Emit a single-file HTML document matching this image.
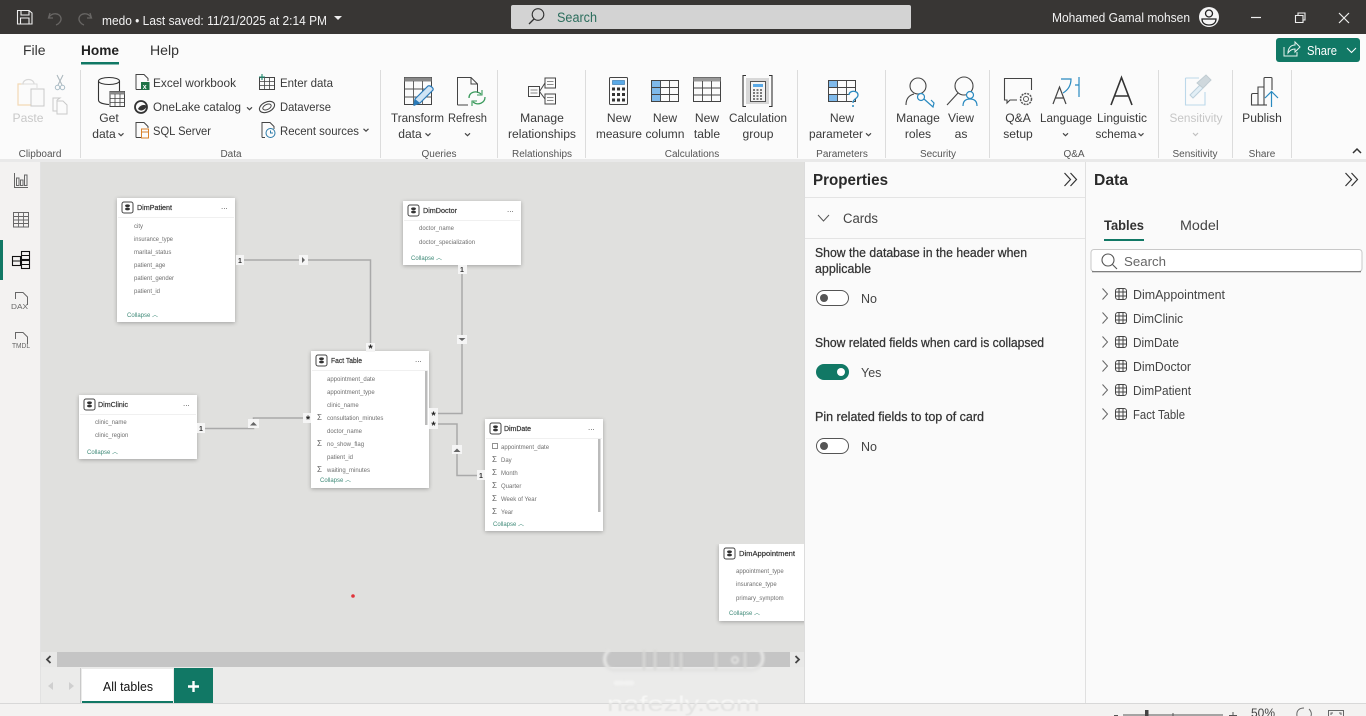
<!DOCTYPE html>
<html lang="en"><head><meta charset="utf-8"><title>Power BI Desktop</title>
<style>
html,body{margin:0;padding:0;width:1366px;height:716px;overflow:hidden;background:#f3f2f1}
.b{position:absolute}
.card{position:absolute;background:#fff;box-shadow:0 1px 4px rgba(0,0,0,.28)}
svg{position:absolute;left:0;top:0}
text{font-family:"Liberation Sans",sans-serif}
.r{font-size:12.1px;fill:#3a3a3a}
.m{text-anchor:middle}
.g{font-size:10px;fill:#555;text-anchor:middle}
.p{font-size:12.5px;fill:#333;font-weight:400;stroke:#333;stroke-width:.25}
.l{font-size:12.5px;fill:#444}
.ct{font-size:7px;fill:#333;stroke:#333;stroke-width:.2}
.f{font-size:6px;fill:#6f6f6f}
.c{font-size:6px;fill:#3f8a78}
.ln{fill:none;stroke:#a9a9a9;stroke-width:1.5}
.mk{fill:#f5f5f5}
.nm{font-size:7px;fill:#333;text-anchor:middle;font-weight:bold}
</style></head><body>
<div class="b" style="left:0;top:0;width:1366px;height:34px;background:#383634"></div>
<div class="b" style="left:511px;top:5px;width:400px;height:24px;background:#d3d3d3;border-radius:2px"></div>
<div class="b" style="left:0;top:34px;width:1366px;height:126px;background:#fbfbfb"></div>
<div class="b" style="left:0;top:159px;width:1366px;height:3px;background:#e9e9e9"></div>
<div class="b" style="left:0;top:162px;width:40px;height:541px;background:#f3f2f1"></div>
<div class="b" style="left:40px;top:162px;width:1px;height:541px;background:#e2e2e2"></div>
<div class="b" style="left:41px;top:162px;width:763px;height:490px;background:#e0e0de"></div>
<div class="b" style="left:41px;top:652px;width:763px;height:15px;background:#e8e8e7"></div>
<div class="b" style="left:57px;top:652px;width:733px;height:15px;background:#c5c5c5"></div>
<div class="b" style="left:41px;top:667px;width:763px;height:36px;background:#ebebea"></div>
<div class="b" style="left:804px;top:162px;width:1px;height:541px;background:#dcdcdc"></div>
<div class="b" style="left:805px;top:162px;width:280px;height:541px;background:#fafafa"></div>
<div class="b" style="left:1085px;top:162px;width:1px;height:541px;background:#e0e0e0"></div>
<div class="b" style="left:1086px;top:162px;width:280px;height:541px;background:#fafafa"></div>
<div class="b" style="left:0;top:703px;width:1366px;height:1px;background:#d8d8d8"></div>
<div class="b" style="left:0;top:240px;width:3px;height:40px;background:#117865"></div>

<div class="card" style="left:117px;top:198px;width:118px;height:124px"></div>
<div class="card" style="left:403px;top:201px;width:118px;height:64px"></div>
<div class="card" style="left:311px;top:351px;width:118px;height:137px"></div>
<div class="card" style="left:485px;top:419px;width:118px;height:112px"></div>
<div class="card" style="left:79px;top:395px;width:118px;height:64px"></div>
<div style="position:absolute;left:715px;top:544px;width:89px;height:84px;overflow:hidden"><div class="card" style="left:4px;top:0;width:95px;height:77px"></div></div>

<svg width="1366" height="716" viewBox="0 0 1366 716" xmlns="http://www.w3.org/2000/svg">
<defs>
<linearGradient id="wm" gradientUnits="userSpaceOnUse" x1="0" y1="694" x2="0" y2="714"><stop offset="0" stop-color="#f7f7f6"/><stop offset=".44" stop-color="#f7f7f6"/><stop offset=".46" stop-color="#e3e3e2"/><stop offset="1" stop-color="#e3e3e2"/></linearGradient>
<g id="ci"><rect x="0" y="0" width="11" height="11" rx="2" fill="#fff" stroke="#444" stroke-width="1"/><ellipse cx="5.5" cy="3.8" rx="2.4" ry="1.4" fill="#333"/><ellipse cx="5.5" cy="7" rx="2.4" ry="1.4" fill="#333"/></g>
<g id="tb"><rect x="-5.5" y="-5.5" width="11" height="11" rx="2.5" fill="none" stroke="#444" stroke-width="1"/><path d="M-2 -5.5V5.5M2 -5.5V5.5M-5.5 -2H5.5M-5.5 2H5.5" stroke="#444" stroke-width="1"/></g>
<path id="ch" d="M-2.5 -1.2L0 1.2L2.5 -1.2" fill="none" stroke="#444" stroke-width="1.2"/>
<path id="dbl" d="M0 0L6 6.5L0 13M6 0L12 6.5L6 13" fill="none" stroke="#333" stroke-width="1.2"/>
<path id="rt" d="M-2.5 -5.5L2.5 0L-2.5 5.5" fill="none" stroke="#666" stroke-width="1"/>
<g id="sg"><text font-size="8" fill="#666" style="font-family:'Liberation Sans',sans-serif">Σ</text></g>
</defs>

<!-- title bar -->
<path d="M17.5 10.5H29L32 13V24H17.5ZM21 10.5V15H29V10.5M20.500 24V18H29V24" fill="none" stroke="#eee" stroke-width="1.100"/>
<path d="M50 13L48.500 18L53 18M49 17.500C52 12 60 13 61 18C61.500 21 59 24 56 25" fill="none" stroke="#686664" stroke-width="1.300"/>
<path d="M90 13L91.500 18L87 18M91 17.500C88 12 80 13 79 18C78.500 21 81 24 84 25" fill="none" stroke="#686664" stroke-width="1.300"/>
<text x="102" y="25" font-size="13" fill="#f2f2f2" textLength="225" lengthAdjust="spacingAndGlyphs">medo • Last saved: 11/21/2025 at 2:14 PM</text>
<path d="M334 16H342L338 20Z" fill="#eee"/>
<circle cx="538" cy="14.500" r="5.800" fill="none" stroke="#333" stroke-width="1.100"/><path d="M534 19L529 24" stroke="#333" stroke-width="1.300"/>
<text x="557" y="22" font-size="13.500" fill="#2c6e5d" textLength="40" lengthAdjust="spacingAndGlyphs">Search</text>
<text x="1052" y="22" font-size="12.500" fill="#f2f2f2" textLength="138" lengthAdjust="spacingAndGlyphs">Mohamed Gamal mohsen</text>
<circle cx="1209" cy="17" r="10" fill="#f5f5f5"/><circle cx="1209" cy="13.500" r="3.500" fill="none" stroke="#222" stroke-width="1.300"/><path d="M1202 19H1216C1216 23 1213 25 1209 25C1205 25 1202 23 1202 19Z" fill="none" stroke="#222" stroke-width="1.300"/>
<path d="M1251 17.500H1261" stroke="#eee" stroke-width="1.200"/>
<path d="M1295.500 15.500H1303V22.500H1295.500ZM1298 15V13H1305V20H1303" fill="none" stroke="#eee" stroke-width="1.100"/>
<path d="M1339 13L1349 23M1349 13L1339 23" stroke="#eee" stroke-width="1.200"/>

<!-- tabs -->
<text x="23" y="55" font-size="14" fill="#333">File</text>
<text x="81" y="55" font-size="14" fill="#222" font-weight="bold" textLength="38" lengthAdjust="spacingAndGlyphs">Home</text>
<rect x="81" y="62" width="38" height="2.500" fill="#117865"/>
<text x="150" y="55" font-size="14" fill="#333" textLength="29" lengthAdjust="spacingAndGlyphs">Help</text>
<rect x="1276" y="38" width="84" height="24" rx="3" fill="#117865"/>
<path d="M1284 47V56H1297V52M1288 53C1288 47 1292 45 1295 45V42L1300 47L1295 52V49C1292 49 1290 50 1288 53Z" fill="none" stroke="#e8f3f0" stroke-width="1"/>
<text x="1307" y="55" font-size="13" fill="#fff" textLength="30" lengthAdjust="spacingAndGlyphs">Share</text>
<path d="M1347 48L1351.500 52.500L1356 48" fill="none" stroke="#fff" stroke-width="1.100"/>

<!-- separators -->
<g stroke="#dcdcdc" stroke-width="1">
<path d="M80.500 70V158M380.500 70V158M497.500 70V158M585.500 70V158M797.500 70V158M885.500 70V158M989.500 70V158M1158.500 70V158M1232.500 70V158M1291.500 70V158"/>
</g>
<!-- group labels -->
<text class="g" x="40" y="157">Clipboard</text><text class="g" x="231" y="157">Data</text><text class="g" x="439" y="157">Queries</text><text class="g" x="542" y="157">Relationships</text><text class="g" x="692" y="157">Calculations</text><text class="g" x="842" y="157">Parameters</text><text class="g" x="938" y="157">Security</text><text class="g" x="1074" y="157">Q&amp;A</text><text class="g" x="1195" y="157">Sensitivity</text><text class="g" x="1262" y="157">Share</text>
<path d="M1353 153L1357 149L1361 153" fill="none" stroke="#333" stroke-width="1.500"/>

<!-- clipboard -->
<path d="M24 84H18V105H31" fill="none" stroke="#f3d9b5" stroke-width="1.200"/><path d="M23 84C23 78 34 78 34 84" fill="none" stroke="#d9d9d9" stroke-width="1.200"/><path d="M21 84H37V88" fill="none" stroke="#ddd" stroke-width="1"/>
<rect x="31" y="89" width="13" height="17" fill="#fafafa" stroke="#c9c9c9"/>
<path d="M57 75L62 85M63 75L58 85" stroke="#a9b6bc" stroke-width="1"/><circle cx="57.500" cy="87.500" r="2.200" fill="none" stroke="#a9bcc6"/><circle cx="62.500" cy="87.500" r="2.200" fill="none" stroke="#a9bcc6"/>
<path d="M57 100V111H53V98H60L57 100M57 101H63L67 105V114H57Z" fill="none" stroke="#c9c9c9"/>
<text class="r m" x="28" y="122" style="fill:#c8c8c8">Paste</text>

<!-- get data -->
<ellipse cx="109" cy="81" rx="10.500" ry="3.500" fill="none" stroke="#333" stroke-width="1.100"/><path d="M98.500 81V100C98.500 103 103 104 109 104.500M119.500 81V91" fill="none" stroke="#333" stroke-width="1.100"/>
<rect x="110" y="91.500" width="14.500" height="15" fill="#fbfbfb" stroke="#444"/><rect x="110" y="91.500" width="14.500" height="3" fill="#888"/><path d="M115 94V106M120 94V106M110 98.500H124.500M110 102.500H124.500" stroke="#444" stroke-width=".8"/>
<text class="r m" x="109" y="122">Get</text><text class="r m" x="104" y="138">data</text><use href="#ch" x="121" y="134.500"/>

<path d="M136 89.500V74.500H144L148 78.500V81M136 89.500H141" fill="none" stroke="#444"/><rect x="141" y="82" width="8.500" height="8" fill="#1e7145"/><text x="142.800" y="89" font-size="7" fill="#fff" font-weight="bold">x</text>
<text class="r" x="153" y="87" textLength="83" lengthAdjust="spacingAndGlyphs">Excel workbook</text>
<circle cx="141" cy="107" r="6" fill="none" stroke="#333" stroke-width="1.800"/><path d="M138 109C140 105 144 104 147 106C145 110 141 112 138 109Z" fill="#333"/>
<text class="r" x="153" y="111" textLength="88" lengthAdjust="spacingAndGlyphs">OneLake catalog</text><use href="#ch" x="249.500" y="108.500"/>
<path d="M136 137.500V122.500H144L148 126.500V128M136 137.500H141" fill="none" stroke="#444"/><rect x="141.500" y="129" width="7" height="9" fill="#fbfbfb" stroke="#d9822b"/><path d="M141.500 132H148.500" stroke="#d9822b"/>
<text class="r" x="153" y="135" textLength="58" lengthAdjust="spacingAndGlyphs">SQL Server</text>

<rect x="259.500" y="77.500" width="15" height="12" fill="none" stroke="#444"/><path d="M264.500 77.500V89.500M269.500 77.500V89.500M259.500 81.500H274.500M259.500 85.500H274.500" stroke="#444" stroke-width=".8"/><path d="M262 74V80M259 77H265" stroke="#1e8a6f" stroke-width="1.100"/>
<text class="r" x="280" y="87" textLength="53" lengthAdjust="spacingAndGlyphs">Enter data</text>
<ellipse cx="267" cy="107" rx="8" ry="5" transform="rotate(-25 267 107)" fill="none" stroke="#444" stroke-width="1.100"/><ellipse cx="267" cy="107" rx="4.500" ry="2.500" transform="rotate(-25 267 107)" fill="none" stroke="#444" stroke-width="1"/>
<text class="r" x="280" y="111" textLength="51" lengthAdjust="spacingAndGlyphs">Dataverse</text>
<path d="M262 137.500V122.500H270L274 126.500V129M262 137.500H265" fill="none" stroke="#444"/><circle cx="270.500" cy="133" r="4.500" fill="#fbfbfb" stroke="#2a7aa8"/><path d="M270.500 130.500V133H273" fill="none" stroke="#2a7aa8"/>
<text class="r" x="280" y="135" textLength="79" lengthAdjust="spacingAndGlyphs">Recent sources</text><use href="#ch" x="366" y="130"/>

<!-- queries -->
<rect x="404.500" y="77.500" width="27" height="27" fill="#fbfbfb" stroke="#444"/><rect x="404.500" y="77.500" width="27" height="4" fill="#888"/><path d="M413.500 81V104M422.500 81V104M404.500 89H431.500M404.500 97H431.500" stroke="#555" stroke-width=".9"/>
<path d="M414 105L415 99L428 86C430 85 434 88 433 90L420 103Z" fill="#cfe4f5" stroke="#2a7ab8" stroke-width="1.200"/><path d="M414 106L415 99L420 103Z" fill="#2a7ab8"/>
<text class="r m" x="417.500" y="122" textLength="53" lengthAdjust="spacingAndGlyphs">Transform</text><text class="r m" x="410" y="138">data</text><use href="#ch" x="428" y="134.500"/>
<path d="M457.500 105V77.500H471L477.500 84V93M457.500 105H468M471 77.500V84H477.500" fill="none" stroke="#444"/>
<path d="M469 98C469 92 476 90 481 94M485 97C485 103 478 106 473 102" fill="none" stroke="#3a9a5c" stroke-width="1.300"/><path d="M482 90V95H477M472 106V101H477" fill="none" stroke="#3a9a5c" stroke-width="1.100"/>
<text class="r m" x="467.500" y="122" textLength="39" lengthAdjust="spacingAndGlyphs">Refresh</text><use href="#ch" x="467.500" y="134.500"/>

<!-- relationships -->
<g fill="#fbfbfb" stroke="#444"><rect x="528.500" y="86.500" width="11" height="10"/><rect x="545" y="78" width="10.500" height="10"/><rect x="545" y="94" width="10.500" height="10"/></g>
<path d="M530.500 90H537.500M530.500 93H537.500M547 81.500H553.500M547 84.500H553.500M547 97.500H553.500M547 100.500H553.500" stroke="#666" stroke-width=".8"/>
<path d="M545 83L539.500 91.500L545 99" fill="none" stroke="#444"/>
<text class="r m" x="542" y="122">Manage</text><text class="r m" x="542" y="138" textLength="68" lengthAdjust="spacingAndGlyphs">relationships</text>

<!-- calculations -->
<rect x="609.500" y="77.500" width="18" height="27" rx="1" fill="#fbfbfb" stroke="#444"/><rect x="612.500" y="80.500" width="12" height="4" fill="#5aa9e6" stroke="#2a6fa8" stroke-width=".6"/>
<g fill="#333"><rect x="612" y="87.500" width="3" height="3"/><rect x="617" y="87.500" width="3" height="3"/><rect x="622" y="87.500" width="3" height="3"/><rect x="612" y="93" width="3" height="3"/><rect x="617" y="93" width="3" height="3"/><rect x="622" y="93" width="3" height="3"/><rect x="612" y="98.500" width="3" height="3"/><rect x="617" y="98.500" width="3" height="3"/><rect x="622" y="98.500" width="3" height="3"/></g>
<text class="r m" x="619" y="122">New</text><text class="r m" x="619" y="138" textLength="46" lengthAdjust="spacingAndGlyphs">measure</text>
<rect x="651.500" y="80.500" width="27" height="21" fill="#fbfbfb" stroke="#444"/><rect x="652" y="81" width="9" height="20" fill="#7fb9ea"/><path d="M660.500 80.500V101.500M669.500 80.500V101.500M651.500 87.500H678.500M651.500 94.500H678.500" stroke="#444" stroke-width=".9"/>
<text class="r m" x="665" y="122">New</text><text class="r m" x="665" y="138" textLength="39" lengthAdjust="spacingAndGlyphs">column</text>
<rect x="693.500" y="77.500" width="27" height="24" fill="#fbfbfb" stroke="#444"/><rect x="693.500" y="77.500" width="27" height="4" fill="#999"/><path d="M702.500 81V101.500M711.500 81V101.500M693.500 88H720.500M693.500 95H720.500" stroke="#444" stroke-width=".9"/>
<text class="r m" x="707" y="122">New</text><text class="r m" x="707" y="138">table</text>
<path d="M746 75.500H743V106.500H746M769 75.500H772V106.500H769" fill="none" stroke="#333" stroke-width="1.100"/><rect x="746" y="78" width="23" height="26" fill="#d8d8d8"/>
<rect x="750.500" y="81.500" width="15" height="20" fill="#f4f4f4" stroke="#444" stroke-width=".9"/><rect x="753" y="84" width="10" height="3" fill="#5aa9e6"/>
<path d="M753 90H763M753 93H763M753 96H763M753 99H763" stroke="#555" stroke-width="1.500" stroke-dasharray="2 1.500"/>
<text class="r m" x="758" y="122" textLength="58" lengthAdjust="spacingAndGlyphs">Calculation</text><text class="r m" x="758" y="138">group</text>

<!-- parameter -->
<rect x="828.500" y="80.500" width="27" height="21" fill="#fbfbfb" stroke="#444"/><rect x="829" y="81" width="9" height="6.500" fill="#7fb9ea"/><rect x="829" y="94.500" width="9" height="6.500" fill="#7fb9ea"/><path d="M837.500 80.500V101.500M846.500 80.500V101.500M828.500 87.500H855.500M828.500 94.500H855.500" stroke="#444" stroke-width=".9"/>
<path d="M849 95C849 90 858 90 858 95C858 99 853 98 853 103" fill="#fbfbfb" stroke="#2a8ac0" stroke-width="1.300"/><circle cx="853" cy="106" r="1" fill="#2a8ac0"/>
<text class="r m" x="842" y="122">New</text><text class="r m" x="836" y="138" textLength="54" lengthAdjust="spacingAndGlyphs">parameter</text><use href="#ch" x="868.500" y="134.500"/>

<!-- security -->
<circle cx="918" cy="86" r="8" fill="none" stroke="#444" stroke-width="1.100"/><path d="M906 105C906 98 910 95 914 94" fill="none" stroke="#444" stroke-width="1.100"/>
<circle cx="921" cy="97" r="3.500" fill="#fbfbfb" stroke="#2a8ac0" stroke-width="1.200"/><path d="M924 99L933 107L934 103L931 100" fill="none" stroke="#2a8ac0" stroke-width="1.200"/>
<text class="r m" x="918" y="122">Manage</text><text class="r m" x="918" y="138">roles</text>
<circle cx="964" cy="86" r="9" fill="none" stroke="#444" stroke-width="1.100"/><path d="M958 93L947 105" stroke="#444" stroke-width="1.100"/>
<circle cx="970" cy="95" r="3.500" fill="#fbfbfb" stroke="#2a8ac0" stroke-width="1.200"/><path d="M963 106C963 101 966 99 970 99C974 99 977 101 977 106" fill="none" stroke="#2a8ac0" stroke-width="1.200"/>
<text class="r m" x="961" y="122">View</text><text class="r m" x="961" y="138">as</text>

<!-- Q&A -->
<path d="M1017 100H1010L1007 103V100H1004.500V78.500H1031.500V90" fill="none" stroke="#444" stroke-width="1.100"/>
<circle cx="1026" cy="99" r="5.500" fill="#fbfbfb" stroke="#555" stroke-width="1.500" stroke-dasharray="2 1"/><circle cx="1026" cy="99" r="2.500" fill="none" stroke="#555"/>
<text class="r m" x="1018" y="122">Q&amp;A</text><text class="r m" x="1018" y="138">setup</text>
<path d="M1053 104L1059.500 87L1066 104M1055.500 98H1063.500" fill="none" stroke="#444" stroke-width="1.200"/><path d="M1061 79H1071C1071 85 1068 90 1063 93M1079 77V97M1075 85H1079" fill="none" stroke="#2a8ac0" stroke-width="1.200"/>
<text class="r m" x="1066" y="122" textLength="52" lengthAdjust="spacingAndGlyphs">Language</text><use href="#ch" x="1065.500" y="134.500"/>
<path d="M1111 105L1121.500 77.500L1132 105M1114.500 96H1128.500" fill="none" stroke="#333" stroke-width="1.600"/>
<text class="r m" x="1122" y="122" textLength="50" lengthAdjust="spacingAndGlyphs">Linguistic</text><text class="r m" x="1116" y="138" textLength="41" lengthAdjust="spacingAndGlyphs">schema</text><use href="#ch" x="1141" y="134.500"/>

<!-- sensitivity -->
<path d="M1185.500 78H1199M1185.500 78V105H1205V92" fill="none" stroke="#bcd8ea" stroke-width="1.100"/><path d="M1190 95L1203 82L1206 85L1193 98Z" fill="#e3eff6" stroke="#bcd0dc"/><path d="M1197 83L1206 75L1211 80L1203 88Z" fill="#cfd8dd" stroke="#c0ccd2"/>
<text class="r m" x="1196" y="122" style="fill:#c6c6c6" textLength="53" lengthAdjust="spacingAndGlyphs">Sensitivity</text><path d="M1193 133L1195.500 135.500L1198 133" fill="none" stroke="#c0c0c0" stroke-width="1.200"/>

<!-- publish -->
<path d="M1251.500 105V95C1251.500 94 1252 93.500 1253 93.500H1258V105ZM1258 105V87H1264V105M1264 90V78.500C1264 78 1264.500 77.500 1265 77.500H1271C1271.500 77.500 1272 78 1272 78.500V90" fill="none" stroke="#444" stroke-width="1.100"/><path d="M1251.500 105H1267" stroke="#444" stroke-width="1.100"/>
<path d="M1271.500 107V92M1265 98L1271.500 91.500L1278 98" fill="none" stroke="#2a8ac0" stroke-width="1.200"/>
<text class="r m" x="1262" y="122">Publish</text>

<!-- left nav -->
<path d="M14.500 173V187.500H28" fill="none" stroke="#666"/><rect x="16.500" y="178" width="2.500" height="7.500" fill="none" stroke="#666"/><rect x="20.500" y="180" width="2.500" height="5.500" fill="none" stroke="#666"/><rect x="24.500" y="175" width="2.500" height="10.500" fill="none" stroke="#666"/>
<rect x="13.500" y="212.500" width="15" height="14.500" fill="none" stroke="#666"/><path d="M13.500 216.500H28.500M13.500 220H28.500M13.500 223.500H28.500M18.500 212.500V227M23.500 212.500V227" stroke="#666" stroke-width=".9"/>
<g fill="#f3f2f1" stroke="#111" stroke-width="1.100"><rect x="12.500" y="256.500" width="8" height="9"/><rect x="21.500" y="251.500" width="8" height="8"/><rect x="21.500" y="260.500" width="8" height="8"/></g><path d="M12.500 261H20.500M21.500 255.500H29.500M21.500 264.500H29.500M20.500 258L21.500 256M20.500 263L21.500 265" stroke="#111" stroke-width="1"/>
<path d="M15.500 299V292.500H23L27.500 297V305" fill="none" stroke="#666"/><text x="11" y="309" font-size="7.500" fill="#666" textLength="17" lengthAdjust="spacingAndGlyphs">DAX</text>
<path d="M15.500 339V332.500H23L27.500 337V344" fill="none" stroke="#666"/><text x="12" y="348" font-size="7.500" fill="#666" textLength="18" lengthAdjust="spacingAndGlyphs">TMDL</text>

<!-- relationships lines -->
<path class="ln" d="M243 260H370.500V344"/>
<path class="ln" d="M462 272V413.500H437"/>
<path class="ln" d="M204 428.500H253.500V418H305"/>
<path class="ln" d="M437 424H457V475.500H477"/>
<g class="mk"><rect x="236" y="255" width="8" height="10"/><rect x="299" y="255" width="9" height="10"/><rect x="366" y="343" width="9" height="9"/><rect x="458" y="265" width="9" height="9"/><rect x="457" y="335" width="10" height="9"/><rect x="429" y="408" width="9" height="11"/><rect x="429" y="419" width="9" height="10"/><rect x="452" y="445" width="10" height="9"/><rect x="477" y="470" width="8" height="10"/><rect x="197" y="423" width="8" height="10"/><rect x="248" y="419" width="11" height="9"/><rect x="303" y="413" width="8" height="10"/></g>
<text class="nm" x="240" y="263">1</text><text class="nm" x="462" y="272">1</text><text class="nm" x="481" y="478">1</text><text class="nm" x="201" y="431">1</text>
<g font-size="11" font-weight="bold" fill="#222" text-anchor="middle"><text x="370.500" y="352">*</text><text x="433.500" y="419">*</text><text x="433.500" y="429">*</text><text x="308" y="423">*</text></g>
<path d="M302 257V263L305 260Z" fill="#666"/><path d="M458.500 338H465.500L462 341Z" fill="#666"/><path d="M453.500 452H460.500L457 448.500Z" fill="#666"/><path d="M250 425.500H257L253.500 422Z" fill="#666"/>

<!-- cards -->
<g style="filter:blur(.35px)">
<use href="#ci" x="122" y="202"/><text class="ct" x="137" y="210" textLength="35" lengthAdjust="spacingAndGlyphs">DimPatient</text><text x="221" y="209" font-size="8" fill="#555">...</text><path d="M118 217.500H234" stroke="#f0f0f0"/>
<text class="f" x="134" y="228">city</text><text class="f" x="134" y="241" textLength="39" lengthAdjust="spacingAndGlyphs">insurance_type</text><text class="f" x="134" y="254">marital_status</text><text class="f" x="134" y="267">patient_age</text><text class="f" x="134" y="280">patient_gender</text><text class="f" x="134" y="293">patient_id</text>
<text class="c" x="127" y="317">Collapse ︿</text>

<use href="#ci" x="408" y="205"/><text class="ct" x="423" y="213" textLength="34" lengthAdjust="spacingAndGlyphs">DimDoctor</text><text x="507" y="212" font-size="8" fill="#555">...</text><path d="M404 220.500H520" stroke="#f0f0f0"/>
<text class="f" x="419" y="230">doctor_name</text><text class="f" x="419" y="244">doctor_specialization</text>
<text class="c" x="411" y="260">Collapse ︿</text>

<use href="#ci" x="316" y="355"/><text class="ct" x="331" y="363" textLength="31" lengthAdjust="spacingAndGlyphs">Fact Table</text><text x="415" y="362" font-size="8" fill="#555">...</text><path d="M312 370.500H428" stroke="#f0f0f0"/>
<text class="f" x="327" y="381">appointment_date</text><text class="f" x="327" y="394">appointment_type</text><text class="f" x="327" y="407">clinic_name</text><text class="f" x="327" y="420">consultation_minutes</text><text class="f" x="327" y="433">doctor_name</text><text class="f" x="327" y="446">no_show_flag</text><text class="f" x="327" y="459">patient_id</text><text class="f" x="327" y="472">waiting_minutes</text>
<use href="#sg" x="317" y="420"/><use href="#sg" x="317" y="446"/><use href="#sg" x="317" y="472"/>
<rect x="425" y="371" width="2.500" height="54" fill="#bbb"/>
<text class="c" x="320" y="482">Collapse ︿</text>

<use href="#ci" x="490" y="423"/><text class="ct" x="504" y="431" textLength="27" lengthAdjust="spacingAndGlyphs">DimDate</text><text x="588" y="430" font-size="8" fill="#555">...</text><path d="M486 438.500H602" stroke="#f0f0f0"/>
<rect x="492.500" y="443.500" width="5" height="5" fill="none" stroke="#777" stroke-width=".8"/>
<text class="f" x="501" y="449">appointment_date</text><text class="f" x="501" y="462">Day</text><text class="f" x="501" y="475">Month</text><text class="f" x="501" y="488">Quarter</text><text class="f" x="501" y="501">Week of Year</text><text class="f" x="501" y="514">Year</text>
<use href="#sg" x="492" y="462"/><use href="#sg" x="492" y="475"/><use href="#sg" x="492" y="488"/><use href="#sg" x="492" y="501"/><use href="#sg" x="492" y="514"/>
<rect x="598" y="439" width="2.500" height="73" fill="#bbb"/>
<text class="c" x="493" y="526">Collapse ︿</text>

<use href="#ci" x="84" y="399"/><text class="ct" x="98" y="407" textLength="30" lengthAdjust="spacingAndGlyphs">DimClinic</text><text x="183" y="406" font-size="8" fill="#555">...</text><path d="M80 414.500H196" stroke="#f0f0f0"/>
<text class="f" x="95" y="424">clinic_name</text><text class="f" x="95" y="437">clinic_region</text>
<text class="c" x="87" y="454">Collapse ︿</text>

<use href="#ci" x="724" y="548"/><text class="ct" x="739" y="556" textLength="56" lengthAdjust="spacingAndGlyphs">DimAppointment</text>
<text class="f" x="736" y="573">appointment_type</text><text class="f" x="736" y="586">insurance_type</text><text class="f" x="736" y="600">primary_symptom</text>
<text class="c" x="729" y="615">Collapse ︿</text>
</g>
<circle cx="353" cy="596" r="1.800" fill="#e0333a"/>

<!-- canvas bottom -->
<path d="M50.500 656L47 659.500L50.500 663" fill="none" stroke="#444" stroke-width="1.800"/>
<path d="M795.500 656L799 659.500L795.500 663" fill="none" stroke="#444" stroke-width="1.800"/>
<path d="M53 682L48 686L53 690Z" fill="#cfcfcf"/><path d="M69 682L74 686L69 690Z" fill="#cfcfcf"/>
<path d="M80.500 668V703" stroke="#c9c9c9"/>
<rect x="82" y="669" width="91" height="32" fill="#fff"/><rect x="82" y="701" width="91" height="2" fill="#117865"/>
<text x="128" y="691" font-size="12.500" fill="#111" text-anchor="middle" textLength="50" lengthAdjust="spacingAndGlyphs">All tables</text>
<rect x="174" y="668" width="39" height="35" fill="#117865"/><path d="M193.500 681V692M188 686.500H199" stroke="#fff" stroke-width="2.400"/>

<!-- watermark -->
<g style="filter:blur(1px)" fill="none" stroke="#e3e3e2">
<path d="M610 650C602 654 603 668 613 670H752C764 668 765 656 760 650" stroke-width="3.500"/>
<path d="M644 650V670M655 650V670M672 652V670M681 652V670M716 652V670M745 652V668" stroke-width="2.500" stroke="#d8d8d7"/>
<circle cx="735" cy="660" r="3" stroke-width="2"/>
<path d="M616 683H622M626 683H632" stroke-width="5" stroke="#f2f2f1" stroke-linecap="round"/>
</g>
<text x="607" y="711" font-size="21" fill="url(#wm)" textLength="153" lengthAdjust="spacingAndGlyphs" style="filter:blur(.6px)">nafezly.com</text>

<!-- properties -->
<text x="813" y="185" font-size="15.500" font-weight="bold" fill="#2a2a2a" textLength="75" lengthAdjust="spacingAndGlyphs">Properties</text>
<use href="#dbl" x="1064.500" y="173"/>
<path d="M805 197.500H1085M805 238.500H1085" stroke="#e4e4e4"/>
<path d="M818 215L823.500 221L829 215" fill="none" stroke="#555" stroke-width="1"/>
<text x="843" y="223" font-size="13.500" fill="#444" textLength="35" lengthAdjust="spacingAndGlyphs">Cards</text>
<text class="p" x="815" y="257" textLength="212" lengthAdjust="spacingAndGlyphs">Show the database in the header when</text>
<text class="p" x="815" y="273" textLength="56" lengthAdjust="spacingAndGlyphs">applicable</text>
<rect x="816.500" y="290.500" width="32" height="15" rx="7.500" fill="#fff" stroke="#555"/><circle cx="824" cy="298" r="4" fill="#555"/>
<text class="l" x="861" y="303">No</text>
<text class="p" x="815" y="347" textLength="229" lengthAdjust="spacingAndGlyphs">Show related fields when card is collapsed</text>
<rect x="816" y="364" width="33" height="16" rx="8" fill="#117865"/><circle cx="841" cy="372" r="4" fill="#fff"/>
<text class="l" x="861" y="377">Yes</text>
<text class="p" x="815" y="421" textLength="169" lengthAdjust="spacingAndGlyphs">Pin related fields to top of card</text>
<rect x="816.500" y="438.500" width="32" height="15" rx="7.500" fill="#fff" stroke="#555"/><circle cx="824" cy="446" r="4" fill="#555"/>
<text class="l" x="861" y="451">No</text>

<!-- data -->
<text x="1094" y="185" font-size="15.500" font-weight="bold" fill="#2a2a2a" textLength="34" lengthAdjust="spacingAndGlyphs">Data</text>
<use href="#dbl" x="1345.500" y="173"/>
<text x="1104" y="230" font-size="13.500" font-weight="bold" fill="#333" textLength="40" lengthAdjust="spacingAndGlyphs">Tables</text>
<text x="1180" y="230" font-size="13.500" fill="#444" textLength="39" lengthAdjust="spacingAndGlyphs">Model</text>
<rect x="1104" y="239" width="40" height="2" fill="#117865"/>
<rect x="1091" y="249.500" width="271" height="22" rx="3" fill="#fff" stroke="#c8c8c8"/><path d="M1092 271.800H1361" stroke="#666"/>
<circle cx="1108" cy="260" r="6" fill="none" stroke="#555" stroke-width="1.100"/><path d="M1112.500 264.500L1117 269" stroke="#555" stroke-width="1.100"/>
<text x="1124" y="266" font-size="13" fill="#666" textLength="42" lengthAdjust="spacingAndGlyphs">Search</text>
<use href="#rt" x="1105" y="294"/><use href="#tb" x="1121" y="294"/><text class="l" x="1133" y="299" textLength="92" lengthAdjust="spacingAndGlyphs">DimAppointment</text>
<use href="#rt" x="1105" y="318"/><use href="#tb" x="1121" y="318"/><text class="l" x="1133" y="323" textLength="50" lengthAdjust="spacingAndGlyphs">DimClinic</text>
<use href="#rt" x="1105" y="342"/><use href="#tb" x="1121" y="342"/><text class="l" x="1133" y="347" textLength="46" lengthAdjust="spacingAndGlyphs">DimDate</text>
<use href="#rt" x="1105" y="366"/><use href="#tb" x="1121" y="366"/><text class="l" x="1133" y="371" textLength="58" lengthAdjust="spacingAndGlyphs">DimDoctor</text>
<use href="#rt" x="1105" y="390"/><use href="#tb" x="1121" y="390"/><text class="l" x="1133" y="395" textLength="58" lengthAdjust="spacingAndGlyphs">DimPatient</text>
<use href="#rt" x="1105" y="414"/><use href="#tb" x="1121" y="414"/><text class="l" x="1133" y="419" textLength="52" lengthAdjust="spacingAndGlyphs">Fact Table</text>

<!-- status -->
<path d="M1114 715.500H1118M1123 715H1223" stroke="#555" stroke-width="1"/><rect x="1145" y="710" width="3.500" height="6" fill="#444"/><path d="M1173 713V716" stroke="#555"/>
<path d="M1229 715.500H1237M1233 712V716" stroke="#555"/>
<text x="1251" y="717" font-size="12" fill="#444">50%</text>
<path d="M1297 716C1296 710 1300 708 1304 708M1309 709C1311 711 1312 713 1311 716" fill="none" stroke="#666"/>
<path d="M1328.500 716V710.500H1343.500V716M1333 713H1331V715M1339 713H1341V715" fill="none" stroke="#666"/>
</svg>
</body></html>
